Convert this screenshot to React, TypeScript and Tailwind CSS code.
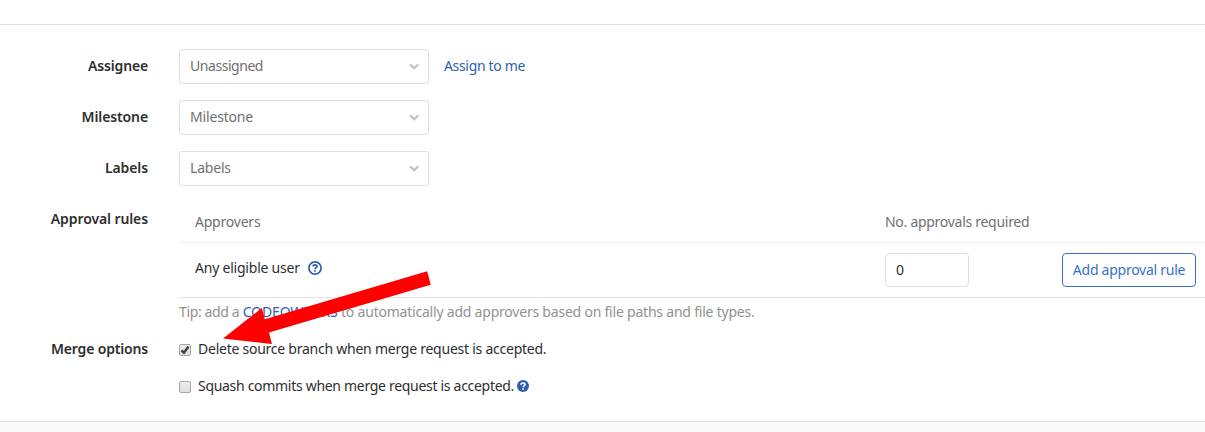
import React from "react";

const font = "font-['Noto_Sans',sans-serif]";

function Chevron() {
  return (
    <svg className="h-[7px] w-[10px]" viewBox="0 0 10 7" fill="none" stroke="#c4c4c4" strokeWidth="2.3">
      <path d="M1 1.3 L5.2 5.2 L9.4 1.3" />
    </svg>
  );
}

function Label({ children, className = "" }: { children: React.ReactNode; className?: string }) {
  return (
    <div className="flex w-[148px] shrink-0 justify-end font-semibold text-[#2e2e2e]">
      <span className={`whitespace-nowrap ${className}`}>{children}</span>
    </div>
  );
}

function SelectRow({ label, value, labelClass, valueClass, children }: {
  label: string; value: string; labelClass: string; valueClass: string; children?: React.ReactNode;
}) {
  return (
    <div className="mb-4 flex h-[35px] items-center">
      <div className="pb-[2px]"><Label className={labelClass}>{label}</Label></div>
      <button className="ml-[31px] flex h-[35px] w-[250px] items-center justify-between rounded-[3px] border border-[#e0e0e0] bg-white pr-[9px] pl-[10px] text-[#707070]">
        <span className={`-mt-px ${valueClass}`}>{value}</span>
        <Chevron />
      </button>
      {children}
    </div>
  );
}

function Checkbox({ checked }: { checked?: boolean }) {
  return (
    <span className="mt-[2px] flex size-3 shrink-0 items-center justify-center rounded-[2px] border border-[#a6a6a6] bg-linear-to-b from-[#ededed] to-[#dedede]">
      {checked && (
        <svg className="size-[10px]" viewBox="0 0 10 10" fill="none" stroke="#404040" strokeWidth="2.4">
          <path d="M1.5 5.3 L4 7.6 L8.5 1.5" />
        </svg>
      )}
    </span>
  );
}

export default function App() {
  return (
    <main className={`relative flex h-[432px] w-[1205px] flex-col overflow-hidden bg-white text-[14px] leading-5 text-[#2e2e2e] ${font}`}>
      <div className="h-[25px] shrink-0 border-b border-[#dfdfdf]" />
      <div className="mt-6 flex flex-col">
        <SelectRow label="Assignee" value="Unassigned" labelClass="tracking-[-0.15px]" valueClass="tracking-[-0.45px]">
          <a className="ml-[15px] pb-[2px] tracking-[-0.33px] text-[#2f5fb3]">Assign to me</a>
        </SelectRow>
        <SelectRow label="Milestone" value="Milestone" labelClass="tracking-[-0.12px]" valueClass="tracking-[-0.17px]" />
        <SelectRow label="Labels" value="Labels" labelClass="tracking-[-0.1px]" valueClass="tracking-[-0.2px]" />
      </div>
      <div className="flex h-[121px] shrink-0">
        <div className="pt-[7px]"><Label className="tracking-[-0.1px]">Approval rules</Label></div>
        <div className="ml-[31px] flex w-[1026px] flex-col">
          <div className="flex h-[41px] items-center border-b border-[#f0f0f0] pl-4 text-[#707070]">
            <span className="w-[690px] tracking-[-0.22px]">Approvers</span>
            <span className="tracking-[-0.28px] whitespace-nowrap">No. approvals required</span>
          </div>
          <div className="flex h-[55px] items-center border-b border-[#e3e3e3] pl-4">
            <div className="flex w-[690px] items-center pb-1">
              <span className="tracking-[-0.22px]">Any eligible user</span>
              <svg className="ml-2 size-[14px]" viewBox="0 0 14 14" fill="none" stroke="#2f5fb3" strokeWidth="1.7">
                <circle cx="7" cy="7" r="6.1" />
                <path d="M5 5.6 C5 3.4 9 3.4 9 5.5 C9 6.9 7 6.7 7 8.2 M7 9.3 V10.7" />
              </svg>
            </div>
            <div className="flex h-[34px] w-[84px] items-center rounded-[4px] border border-[#dfdfdf] pl-[10px]">0</div>
            <button className="ml-[93px] flex h-[34px] w-[134px] items-center justify-center rounded-[4px] border border-[#3771cf] tracking-[-0.26px] whitespace-nowrap text-[#3771cf]">Add approval rule</button>
          </div>
          <p className="mt-1 whitespace-nowrap text-[#929292]">
            <span className="tracking-[-0.36px]">Tip: add a </span>
            <a className="tracking-[-0.12px] text-[#2f5fb3]">CODEOWNERS</a>
            <span className="tracking-[-0.215px]"> to automatically add approvers based on file paths and file types.</span>
          </p>
        </div>
      </div>
      <div className="mt-[16px] flex h-[82px] shrink-0">
        <Label className="tracking-[-0.17px]">Merge options</Label>
        <div className="ml-[31px] flex flex-col gap-[17px]">
          <div className="flex h-5 items-center gap-[7px] whitespace-nowrap">
            <Checkbox checked />
            <span className="tracking-[-0.245px]">Delete source branch when merge request is accepted.</span>
          </div>
          <div className="flex h-5 items-center gap-[7px] whitespace-nowrap">
            <Checkbox />
            <span className="tracking-[-0.3px]">Squash commits when merge request is accepted.</span>
            <svg className="-ml-[4px] size-3" viewBox="0 0 12 12" fill="none">
              <circle cx="6" cy="6" r="6" fill="#2f5fb3" />
              <path d="M4 4.7 C4 2.4 8 2.5 8 4.6 C8 5.9 6.1 5.8 6.1 7.3 M6.1 8.2 V9.8" stroke="#fff" strokeWidth="1.7" />
            </svg>
          </div>
        </div>
      </div>
      <footer className="grow border-t border-[#e5e5e5] bg-[#fafafa]" />
      <svg className="absolute top-0 left-0 h-[432px] w-[1205px]" viewBox="0 0 1205 432">
        <path fill="#ff0000" d="M427.2 271.2 L430.7 284.7 L269 332.4 L272 344 L223 338.5 L261.8 308 L264.8 319.2 Z" />
      </svg>
    </main>
  );
}
